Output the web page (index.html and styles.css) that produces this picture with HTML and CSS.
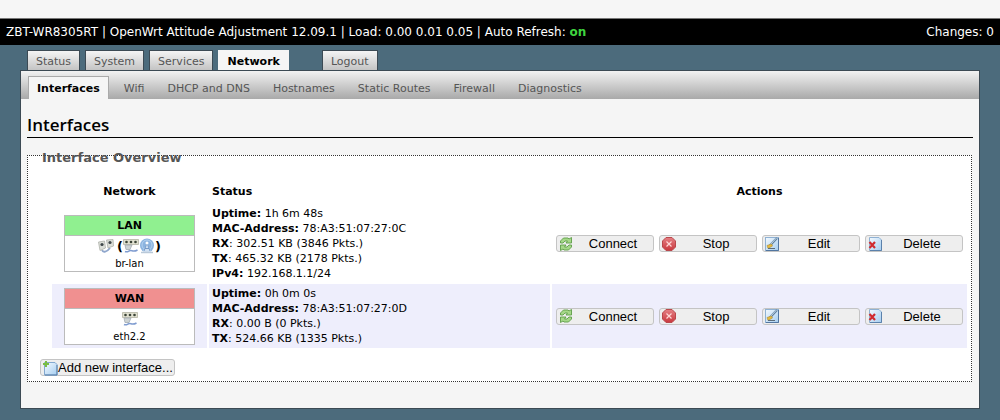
FILE: index.html
```html
<!DOCTYPE html>
<html lang="en">
<head>
    <meta charset="UTF-8">
    <meta name="viewport" content="width=device-width, initial-scale=1.0">
    <title>ZBT-WR8305RT - Interfaces - LuCI</title>
    <link rel="stylesheet" href="styles.css">
</head>
<body>

    <!-- Icon set -->
    <svg class="icon-defs" width="0" height="0" aria-hidden="true">
        <defs>
            <linearGradient id="paper" x1="0" y1="0" x2="1" y2="1">
                <stop offset="0" stop-color="#f4faff" />
                <stop offset="1" stop-color="#a5cdf0" />
            </linearGradient>
            <linearGradient id="red" x1="0" y1="0" x2="0" y2="1">
                <stop offset="0" stop-color="#e58085" />
                <stop offset="1" stop-color="#c9383e" />
            </linearGradient>
        </defs>
        <symbol id="reload" viewBox="0 0 16 16">
            <path d="M2.500 7 V5 L5.500 2 H10 L11 3 L13.500 1.500 V7 H8 L9.500 5 H7 L5 7 Z" fill="#a5d888" stroke="#5f9e48" stroke-width="0.900" />
            <path d="M13.500 9 V11 L10.500 14 H6 L5 13 L2.500 14.500 V9 H8 L6.500 11 H9 L11 9 Z" fill="#a5d888" stroke="#5f9e48" stroke-width="0.900" />
        </symbol>
        <symbol id="stop" viewBox="0 0 16 16">
            <path d="M5 1.500 H11 L14.500 5 V11 L11 14.500 H5 L1.500 11 V5 Z" fill="url(#red)" stroke="#b9484c" />
            <path d="M5.500 5.500 L10.500 10.500 M10.500 5.500 L5.500 10.500" stroke="#ffd8d8" stroke-width="1.200" />
        </symbol>
        <symbol id="edit" viewBox="0 0 16 16">
            <rect x="1.500" y="1.500" width="13" height="13" fill="url(#paper)" stroke="#8fb1d3" />
            <path d="M14.500 2 V14.500 H2" fill="none" stroke="#5276a0" />
            <path d="M13 2 L6 9.500" stroke="#5f7f9c" stroke-width="2.200" />
            <path d="M12.500 2 L6 9" stroke="#c3d9eb" stroke-width="1" />
            <path d="M7.500 8 L3 9.500 L4 12.500 L8.500 10 Z" fill="#e6bb3c" stroke="#a78a3c" stroke-width="0.600" />
            <path d="M4 12.500 H11" stroke="#5c6c78" />
        </symbol>
        <symbol id="delete" viewBox="0 0 16 16">
            <path d="M2.500 1.500 H12 L14.500 4 V14.500 H2.500 Z" fill="url(#paper)" stroke="#8fb1d3" />
            <path d="M14.500 4 V14.500 H3" fill="none" stroke="#5b81ab" />
            <path d="M2.500 6 L8 12 M8 6 L2.500 12" stroke="#d02b30" stroke-width="2.200" />
        </symbol>
        <symbol id="add" viewBox="0 0 16 16">
            <path d="M2.500 2.500 H13 L15 4.500 V15 H2.500 Z" fill="url(#paper)" stroke="#83a9d0" />
            <path d="M15 5 V15 H3" fill="none" stroke="#577faa" />
            <path d="M4 1 V7 M1 4 H7" stroke="#79bd45" stroke-width="2" />
        </symbol>
        <symbol id="bridge" viewBox="0 0 16 16">
            <path d="M4 12 C5 15 9 14 12 10" fill="none" stroke="#8fa6cc" stroke-width="1.800" />
            <path d="M0.500 4 L6.500 3 L7.500 10 L2 12.500 Z" fill="#dcdfd9" stroke="#aeb1aa" stroke-width="0.800" />
            <path d="M8.500 2 L15 1.500 L15.500 8 L10 10 Z" fill="#dcdfd9" stroke="#aeb1aa" stroke-width="0.800" />
            <circle cx="4" cy="6.500" r="1.600" fill="#3f474a" />
            <circle cx="12" cy="4.500" r="1.600" fill="#3f474a" />
        </symbol>
        <symbol id="ethernet" viewBox="0 0 16 16">
            <path d="M0.500 1.500 H15.500 V6.500 H0.500 Z" fill="#e0e0d0" stroke="#b2b3a2" stroke-width="0.800" />
            <circle cx="3.500" cy="4" r="1.300" fill="#3b4438" />
            <circle cx="8" cy="4" r="1.300" fill="#3b4438" />
            <circle cx="12.500" cy="4" r="1.300" fill="#3b4438" />
            <path d="M2 7 H9 L7 11.500 H3 Z" fill="#cdd3d3" stroke="#a3abb1" stroke-width="0.800" />
            <path d="M2 13.500 C5 15 6 12 8 12.500 S11 14 14.500 12" fill="none" stroke="#7f9cd0" stroke-width="1.500" />
        </symbol>
        <symbol id="wifi" viewBox="0 0 16 16">
            <circle cx="8" cy="7.500" r="7" fill="#8bb4e0" />
            <circle cx="8" cy="7" r="5" fill="none" stroke="#b5d2f0" />
            <path d="M8 5 L3.500 14 H12.500 Z" fill="#cfe0f2" />
            <path d="M8 5 L5 13 M8 5 L11 13 M6 10.500 H10" stroke="#6c93c4" stroke-width="0.900" />
            <circle cx="8" cy="5" r="1.500" fill="#fff" />
            <path d="M2 14.500 H14" stroke="#b9c9d9" stroke-width="1.500" />
        </symbol>
    </svg>

    <header class="topbar">
        <div>ZBT-WR8305RT | OpenWrt Attitude Adjustment 12.09.1 | Load: 0.00 0.01 0.05 | Auto Refresh: <a href="#" class="refresh">on</a></div>
        <div>Changes: 0</div>
    </header>

    <nav class="tabs">
        <a href="#">Status</a>
        <a href="#">System</a>
        <a href="#">Services</a>
        <a href="#" class="active">Network</a>
        <a href="#" class="logout">Logout</a>
    </nav>

    <main class="panel">
        <nav class="submenu">
            <a href="#" class="active">Interfaces</a>
            <a href="#">Wifi</a>
            <a href="#">DHCP and DNS</a>
            <a href="#">Hostnames</a>
            <a href="#">Static Routes</a>
            <a href="#">Firewall</a>
            <a href="#">Diagnostics</a>
        </nav>

        <div class="content">
            <h1>Interfaces</h1>

            <fieldset>
                <legend>Interface Overview</legend>

                <table>
                    <thead>
                        <tr>
                            <th class="col-network">Network</th>
                            <th class="col-status">Status</th>
                            <th class="col-actions">Actions</th>
                        </tr>
                    </thead>
                    <tbody>
                        <tr>
                            <td>
                                <div class="ifacebox">
                                    <div class="ifacebox-head lan">LAN</div>
                                    <div class="ifacebox-icons">
                                        <svg><use href="#bridge" /></svg>
                                        <span class="ports">(<svg><use href="#ethernet" /></svg><svg><use href="#wifi" /></svg>)</span>
                                    </div>
                                    <div class="ifacebox-name">br-lan</div>
                                </div>
                            </td>
                            <td>
                                <b>Uptime:</b> 1h 6m 48s<br>
                                <b>MAC-Address:</b> 78:A3:51:07:27:0C<br>
                                <b>RX</b>: 302.51 KB (3846 Pkts.)<br>
                                <b>TX</b>: 465.32 KB (2178 Pkts.)<br>
                                <b>IPv4:</b> 192.168.1.1/24
                            </td>
                            <td>
                                <div class="actions">
                                    <button type="button"><svg><use href="#reload" /></svg><span>Connect</span></button>
                                    <button type="button"><svg><use href="#stop" /></svg><span>Stop</span></button>
                                    <button type="button"><svg><use href="#edit" /></svg><span>Edit</span></button>
                                    <button type="button"><svg><use href="#delete" /></svg><span>Delete</span></button>
                                </div>
                            </td>
                        </tr>
                        <tr class="alt">
                            <td>
                                <div class="ifacebox">
                                    <div class="ifacebox-head wan">WAN</div>
                                    <div class="ifacebox-icons">
                                        <svg><use href="#ethernet" /></svg>
                                    </div>
                                    <div class="ifacebox-name">eth2.2</div>
                                </div>
                            </td>
                            <td>
                                <b>Uptime:</b> 0h 0m 0s<br>
                                <b>MAC-Address:</b> 78:A3:51:07:27:0D<br>
                                <b>RX</b>: 0.00 B (0 Pkts.)<br>
                                <b>TX</b>: 524.66 KB (1335 Pkts.)
                            </td>
                            <td>
                                <div class="actions">
                                    <button type="button"><svg><use href="#reload" /></svg><span>Connect</span></button>
                                    <button type="button"><svg><use href="#stop" /></svg><span>Stop</span></button>
                                    <button type="button"><svg><use href="#edit" /></svg><span>Edit</span></button>
                                    <button type="button"><svg><use href="#delete" /></svg><span>Delete</span></button>
                                </div>
                            </td>
                        </tr>
                    </tbody>
                </table>

                <button type="button" class="add"><svg><use href="#add" /></svg>Add new interface...</button>
            </fieldset>
        </div>
    </main>

</body>
</html>
```
FILE: styles.css
```css
* {
    box-sizing: border-box;
}

body {
    margin: 0;
    padding: 18px 0 10px;
    background: linear-gradient(#f6f6f6 18px, #4c6b7c 18px) no-repeat #4c6b7c;
    font-family: Verdana, "DejaVu Sans", sans-serif;
    font-size: 11px;
    color: #000;
}

a {
    color: inherit;
    text-decoration: none;
}

.icon-defs {
    position: absolute;
}

/* Top bar */
.topbar {
    display: flex;
    justify-content: space-between;
    padding: 0 6px;
    border-top: 1px solid #777;
    background: #000;
    color: #fff;
    font-size: 12px;
    line-height: 26px;
}

.topbar .refresh {
    color: #3fd43f;
    font-weight: bold;
}

/* Main menu */
.tabs {
    display: flex;
    gap: 5px;
    padding: 5px 27px 0;
}

.tabs a {
    height: 20px;
    padding: 1px 8px 0;
    border: 1px solid #3c4a54;
    border-bottom: 0;
    background: linear-gradient(#f4f4f4, #c4c4c4);
    color: #555;
    line-height: 20px;
}

.tabs .active {
    border-color: #f5f5f5;
    background: #f5f5f5;
    color: #000;
    font-weight: bold;
}

.tabs .logout {
    margin-left: 28px;
}

/* Page panel */
.panel {
    margin: 0 20px;
    border: 1px solid #3c4a54;
    background: #f5f5f5;
}

.submenu {
    display: flex;
    gap: 7px;
    padding: 5px 7px 0;
    background: linear-gradient(#f2f2f2, #a9a9a9);
}

.submenu a {
    padding: 2px 8px 0;
    color: #555;
    line-height: 21px;
}

.submenu .active {
    padding-top: 1px;
    border: 1px solid #aaa;
    border-bottom: 0;
    background: #f5f5f5;
    color: #000;
    font-weight: bold;
}

.content {
    padding: 14px 6px 26px;
}

h1 {
    margin: 0 0 17px;
    border-bottom: 1px solid #000;
    font-family: "Trebuchet MS", "Open Sans", sans-serif;
    font-size: 17px;
    font-weight: 600;
    line-height: 24px;
}

fieldset {
    margin: 0 1px 0 0;
    padding: 0 3px 5px 12px;
    border: 1px dotted #333;
    background: #fff;
}

/* floated so that the border runs on behind the text */
legend {
    float: left;
    width: 100%;
    margin-top: -8px;
    padding: 0 2px;
    color: #555;
    font-size: 13px;
    font-weight: bold;
    line-height: 20px;
}

/* Interface table */
table {
    clear: both;
    width: calc(100% - 9px);
    margin: 0 0 10px 10px;
    border-spacing: 2px 1px;
    table-layout: fixed;
}

th {
    padding: 15px 3px 3px;
    line-height: 16px;
}

.col-network {
    width: 155px;
}

.col-status {
    width: 341px;
    text-align: left;
}

td {
    padding: 2px 3px;
    line-height: 15px;
}

.alt td {
    background: #eeeefc;
}

.ifacebox {
    width: 131px;
    margin: 0 auto;
    border: 1px solid #bbb;
    background: #fff;
    text-align: center;
}

.ifacebox-head {
    border-bottom: 1px solid #bbb;
    font-weight: bold;
    line-height: 19px;
}

.lan {
    background: #90f090;
}

.wan {
    background: #f09090;
}

.ifacebox-icons {
    display: flex;
    align-items: center;
    justify-content: center;
    gap: 3px;
    height: 20px;
    font-size: 13px;
    font-weight: bold;
}

.ports {
    display: flex;
    align-items: center;
}

.ifacebox-name {
    font-size: 10px;
    line-height: 15px;
}

svg {
    flex: none;
    width: 16px;
    height: 16px;
}

/* Buttons */
.actions {
    display: flex;
    gap: 5px;
    padding: 0 1px;
}

button {
    display: flex;
    align-items: center;
    height: 17px;
    padding: 0 1px;
    border: 1px solid #c4c4c4;
    border-radius: 3px;
    background: #eee;
    color: #000;
    font-family: Arial, "Liberation Sans", sans-serif;
    font-size: 13px;
    line-height: 15px;
}

.actions button {
    flex: 1;
}

.actions span {
    flex: 1;
    text-align: center;
}
```
